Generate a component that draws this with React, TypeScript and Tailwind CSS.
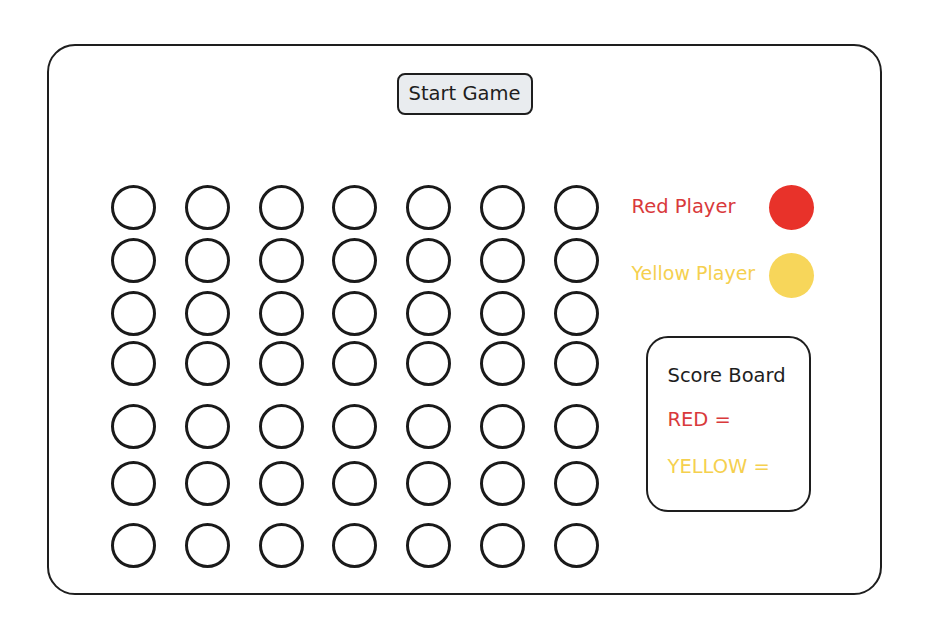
import React from "react";

const font = { fontFamily: '"DejaVu Sans", "Liberation Sans", sans-serif' };

const rowMargins = ["mt-0", "mt-[8px]", "mt-[8px]", "mt-[5px]", "mt-[18px]", "mt-[12px]", "mt-[17px]"];

function Hole() {
  return <div className="w-[45px] h-[45px] rounded-full border-[3px] border-[#1a1a1a]" />;
}

export default function App() {
  return (
    <div className="w-[936px] h-[634px] bg-white pt-[44px] pl-[47px]" style={font}>
      <div className="w-[835px] h-[551px] border-2 border-[#1e1e1e] rounded-[28px] flex flex-col items-center">
        <button className="mt-[27px] w-[136px] h-[42px] rounded-[8px] border-2 border-[#1e1e1e] bg-[#e9ecef] text-[#1e1e1e] text-[19.5px] leading-none flex items-center justify-center">
          Start Game
        </button>
        <div className="self-stretch mt-[70px] pl-[62px] flex">
          <div className="flex flex-col">
            {rowMargins.map((m, r) => (
              <div key={r} className={`flex gap-x-[28.75px] ${m}`}>
                {Array.from({ length: 7 }).map((_, c) => (
                  <Hole key={c} />
                ))}
              </div>
            ))}
          </div>
          <div className="ml-[33px] flex flex-col">
            <div className="w-[182px] h-[45px] flex items-center justify-between">
              <span className="text-[19.5px] text-[#d9393b] -mt-[2px]">Red Player</span>
              <div className="w-[45px] h-[45px] rounded-full bg-[#e8322a]" />
            </div>
            <div className="mt-[23px] w-[182px] h-[45px] flex items-center justify-between">
              <span className="text-[19px] text-[#f5d04f] -mt-[5px]">Yellow Player</span>
              <div className="w-[45px] h-[45px] rounded-full bg-[#f7d65a]" />
            </div>
            <div className="mt-[38px] ml-[14px] w-[165px] h-[176px] border-2 border-[#1e1e1e] rounded-[22px] pl-[20px] pt-[26px] flex flex-col">
              <span className="text-[19.5px] leading-[24px] text-[#1e1e1e]">Score Board</span>
              <span className="mt-[20px] text-[19.5px] leading-[24px] text-[#d9393b]">RED =</span>
              <span className="mt-[23px] text-[19.5px] leading-[24px] text-[#f5d04f]">YELLOW =</span>
            </div>
          </div>
        </div>
      </div>
    </div>
  );
}
